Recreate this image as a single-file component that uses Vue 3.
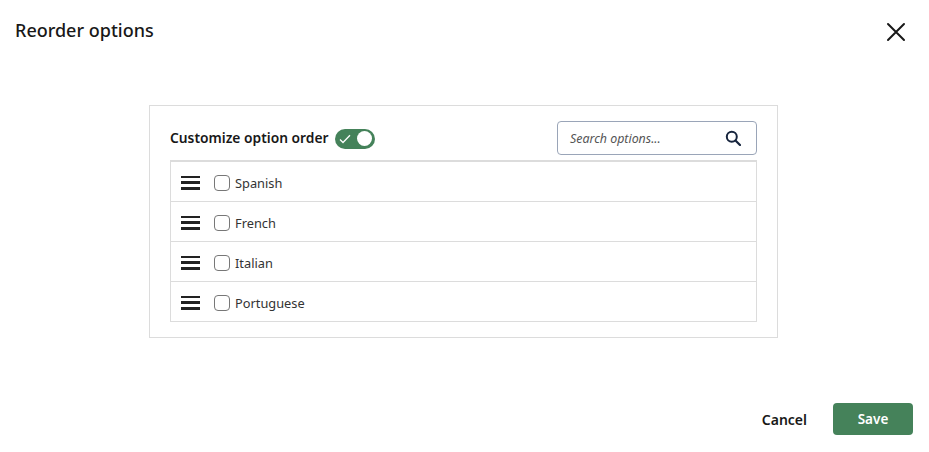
<template>
  <div class="modal">
    <div class="modal-head">
      <h2 class="modal-title">Reorder options</h2>
      <button class="close-btn" aria-label="Close">
        <svg width="20" height="20" viewBox="0 0 20 20"><path d="M2 2 L18 18 M18 2 L2 18" stroke="#181818" stroke-width="2" stroke-linecap="round" fill="none" /></svg>
      </button>
    </div>
    <div class="modal-body">
      <div class="panel">
        <div class="panel-top">
          <div class="toggle-wrap">
            <span class="toggle-label">Customize option order</span>
            <span class="toggle">
              <svg width="12" height="10" viewBox="0 0 12 10"><path d="M1 5.5 L4 8.5 L11 1.2" stroke="#fff" stroke-width="1.3" fill="none" /></svg>
              <span class="knob"></span>
            </span>
          </div>
          <div class="search">
            <span class="search-text">Search options...</span>
            <svg width="16" height="16" viewBox="0 0 16 16"><circle cx="6.8" cy="6.8" r="5" stroke="#16243d" stroke-width="2" fill="none" /><path d="M10.5 10.5 L15 15" stroke="#16243d" stroke-width="2.2" stroke-linecap="round" /></svg>
          </div>
        </div>
        <ul class="option-list">
          <li class="option" v-for="o in options" :key="o">
            <span class="drag"><i></i><i></i><i></i></span>
            <span class="check"></span>
            <span class="option-name">{{ o }}</span>
          </li>
        </ul>
      </div>
    </div>
    <div class="modal-foot">
      <button class="btn-cancel">Cancel</button>
      <button class="btn-save">Save</button>
    </div>
  </div>
</template>

<script setup>
const options = ['Spanish', 'French', 'Italian', 'Portuguese']
</script>

<style>
html, body { margin: 0; background: #fff; }
</style>

<style scoped>
.modal { width: 929px; height: 452px; display: flex; flex-direction: column; font-family: "Noto Sans", "Open Sans", sans-serif; color: #181818; box-sizing: border-box; }
.modal-head { display: flex; justify-content: space-between; align-items: center; height: 60px; box-sizing: border-box; padding: 0 23px 0 15px; }
.modal-title { margin: 0; font-size: 18px; font-weight: 500; }
.close-btn { border: 0; background: none; padding: 0; display: flex; margin-top: 3px; }
.modal-body { display: flex; justify-content: center; padding: 45px 2px 0 0; height: 233px; }
.panel { width: 629px; height: 233px; box-sizing: border-box; border: 1px solid #dcdcdc; padding: 13px 20px; }
.panel-top { display: flex; justify-content: space-between; align-items: center; height: 38px; }
.toggle-wrap { display: flex; align-items: center; gap: 7px; }
.toggle-label { font-size: 13.8px; font-weight: 600; margin-top: -1px; }
.toggle { width: 40px; height: 20px; border-radius: 10px; background: #45825a; display: flex; align-items: center; justify-content: space-between; padding: 0 3px 0 4px; box-sizing: border-box; margin-top: 1px; }
.knob { width: 15px; height: 15px; border-radius: 50%; background: #fff; }
.search { width: 200px; height: 34px; box-sizing: border-box; border: 1px solid #9aa5b8; border-radius: 4px; display: flex; align-items: center; justify-content: space-between; padding: 0 15px 0 12px; }
.search-text { font-size: 12.4px; font-style: italic; color: #555; }
.option-list { list-style: none; margin: 3px 0 0; padding: 0; border: 1px solid #dcdcdc; border-top: 2px solid #dcdcdc; }
.option { height: 40px; box-sizing: border-box; display: flex; align-items: center; padding: 2px 0 0 10px; border-bottom: 1px solid #dcdcdc; }
.option:last-child { border-bottom: 0; height: 39px; }
.drag { width: 19px; display: flex; flex-direction: column; gap: 3.25px; margin-right: 14px; }
.drag i { display: block; height: 2.5px; background: #222; }
.check { width: 14px; height: 14px; border: 1px solid #777; border-radius: 4px; margin-right: 5px; }
.option-name { font-size: 12.8px; color: #333; }
.modal-foot { display: flex; justify-content: flex-end; align-items: center; margin-top: auto; height: 49px; box-sizing: border-box; padding: 0 16px 17px 0; gap: 26px; }
.btn-cancel { border: 0; background: none; padding: 0; font: 600 14px "Noto Sans", sans-serif; color: #181818; }
.btn-save { width: 80px; height: 32px; border: 0; border-radius: 4px; background: #45825a; color: #fff; font: 600 13.5px "Noto Sans", sans-serif; }
</style>
